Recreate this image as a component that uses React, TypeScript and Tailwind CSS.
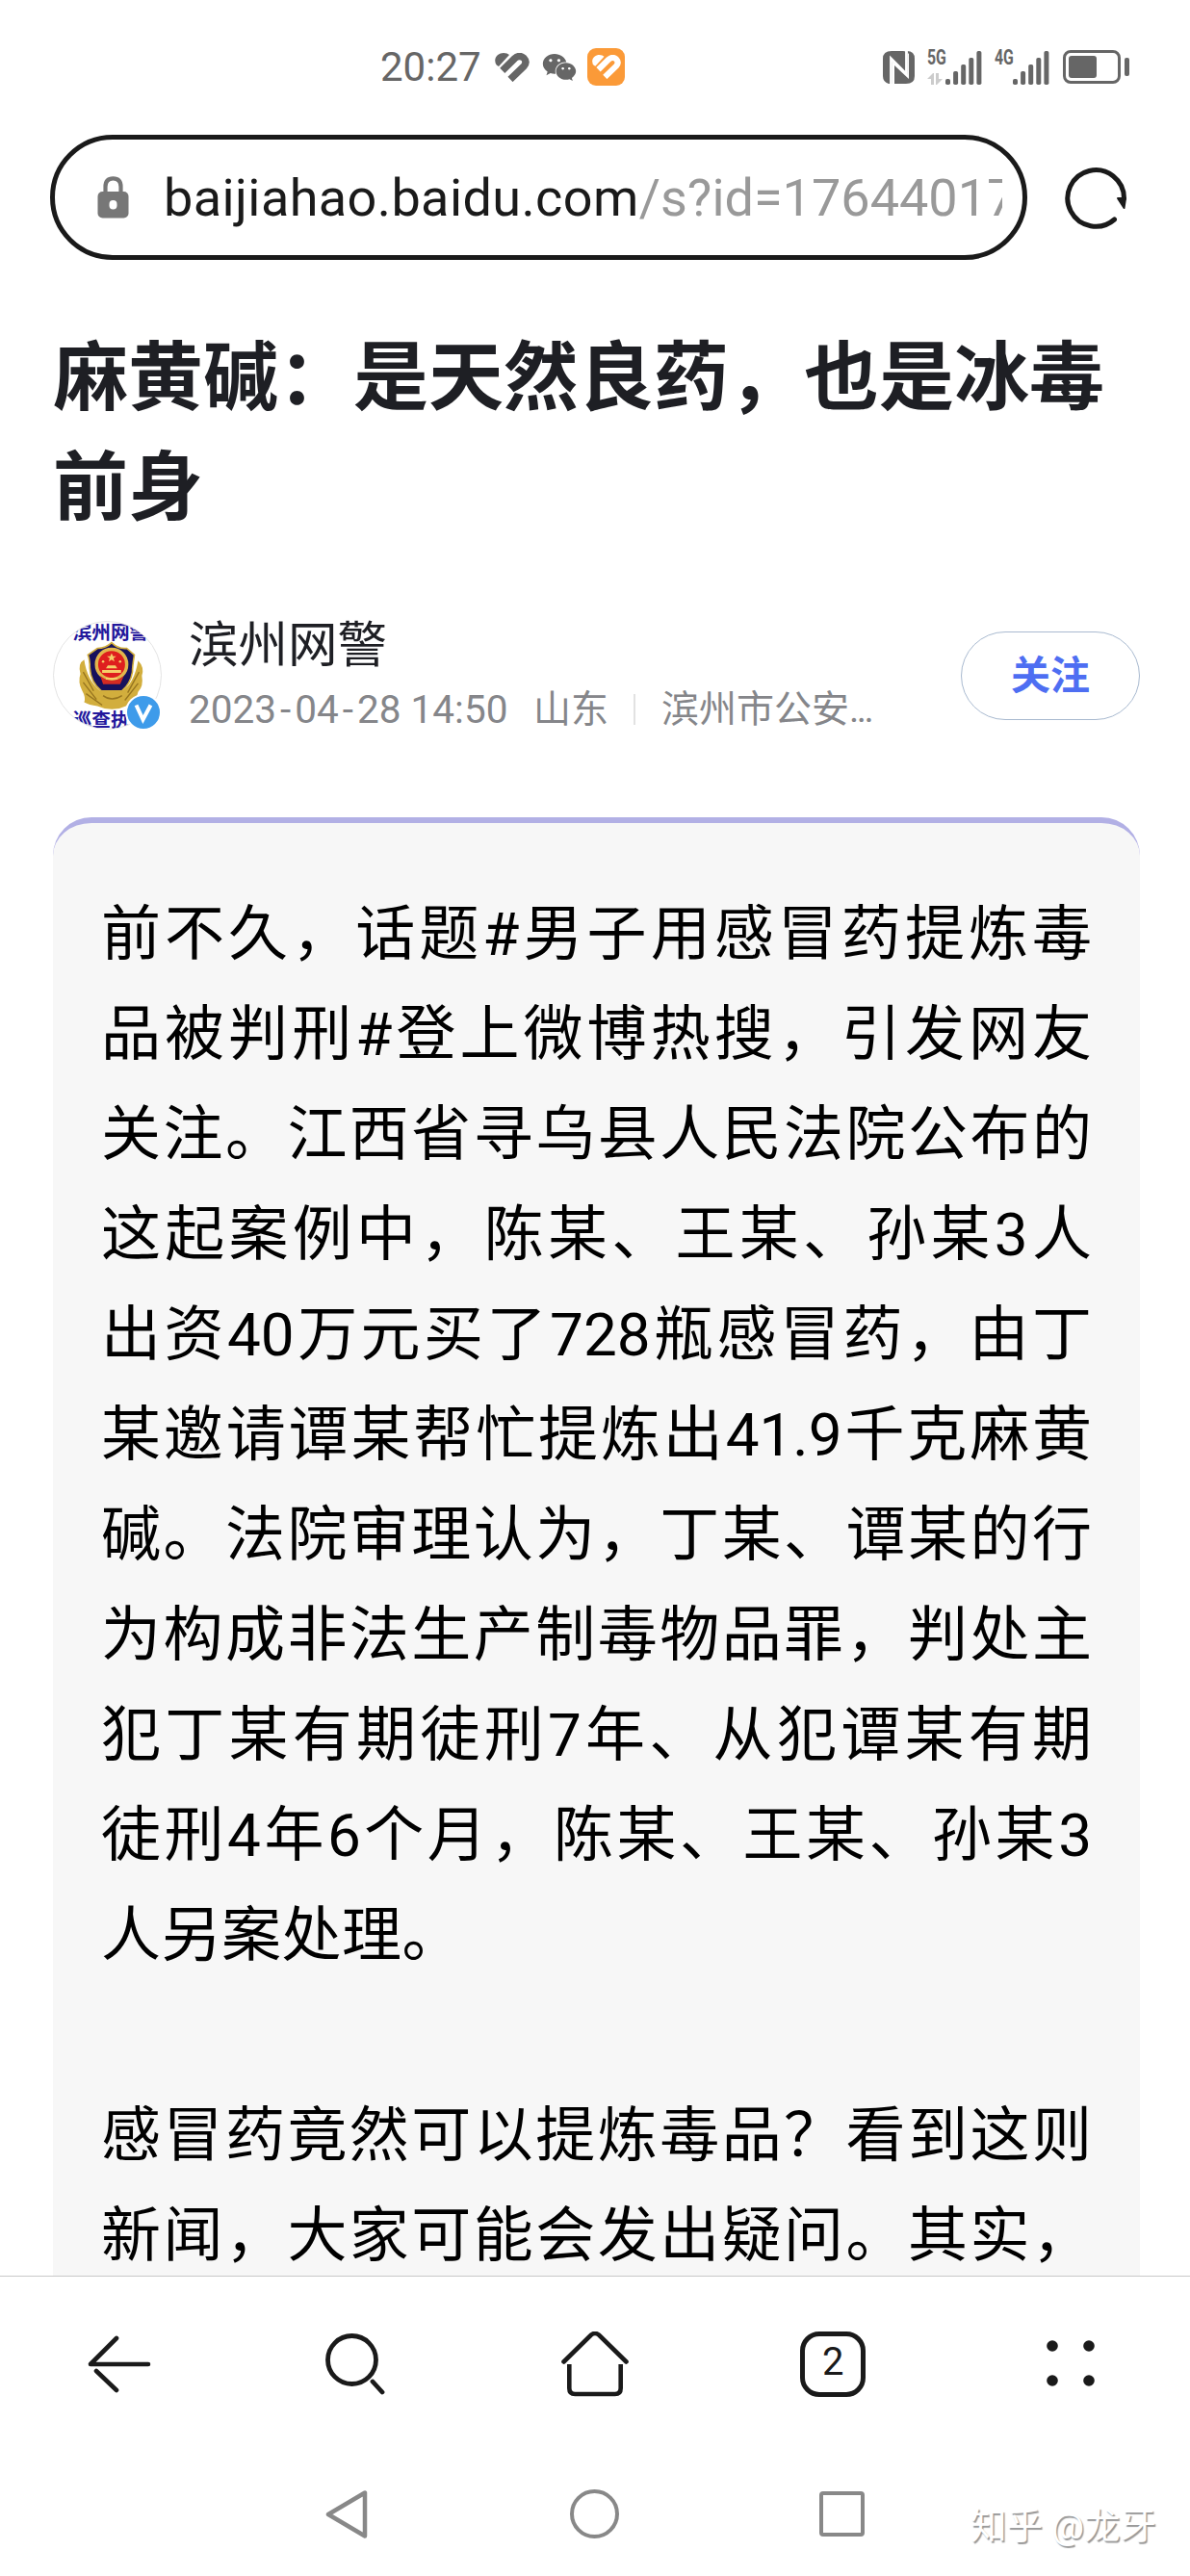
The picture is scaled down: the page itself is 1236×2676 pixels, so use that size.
import type { ReactNode } from 'react';
import { FaWeixin } from 'react-icons/fa';

const firstParagraph = [
  '前不久，话题#男子用感冒药提炼毒',
  '品被判刑#登上微博热搜，引发网友',
  '关注。江西省寻乌县人民法院公布的',
  '这起案例中，陈某、王某、孙某3人',
  '出资40万元买了728瓶感冒药，由丁',
  '某邀请谭某帮忙提炼出41.9千克麻黄',
  '碱。法院审理认为，丁某、谭某的行',
  '为构成非法生产制毒物品罪，判处主',
  '犯丁某有期徒刑7年、从犯谭某有期',
  '徒刑4年6个月，陈某、王某、孙某3',
  '人另案处理。'
];

const secondParagraph = ['感冒药竟然可以提炼毒品？看到这则', '新闻，大家可能会发出疑问。其实，'];

const signalBars = [6, 14, 21, 28, 35];

function Signal() {
  return (
    <svg width="38" height="36" viewBox="0 0 38 36" fill="#666">
      {signalBars.map((height, index) => (
        <rect key={height} x={index * 8.1} y={36 - height} width="5" height={height} rx="1.8" />
      ))}
    </svg>
  );
}

function HeartMark({ className }: { className: string }) {
  return (
    <svg className={className} viewBox="0 0 36 30" fill="currentColor">
      <path d="M0.8 11 C-1.5 4 4 0 9 0 Q13 0 15 2 L4 14 Q1.500 13 0.8 11 Z" />
      <path
        d="M7.800 18.300 L20.500 5.800 Q25.500 1.500 30 5.300 Q34 9.500 30 14 L16 27.500"
        fill="none"
        stroke="currentColor"
        strokeWidth="7.300"
      />
    </svg>
  );
}

function StatusBar() {
  return (
    <header className="flex h-[140px] shrink-0 items-center pb-[1px] pl-[395px] text-[#666]">
      <span className="w-[119px] text-[42px] leading-none">20:27</span>
      <HeartMark className="h-[30px] w-[36px]" />
      <FaWeixin className="ml-[13px] h-[36px] w-[36px]" />
      <span className="ml-[11px] flex h-[39px] w-[39px] items-center justify-center rounded-[9px] bg-[#fb9a38] text-white">
        <HeartMark className="h-[25px] w-[30px]" />
      </span>
      <svg className="ml-[268px]" width="33" height="34" viewBox="0 0 33 34">
        <path d="M9 0 H21 Q24 0 26 2 V25 L10 11 V34 H6 Q0 32 0 26 V8 Q0 0 9 0 Z" fill="#666" />
        <path d="M24 0 H25 Q33 0 33 8 V26 Q33 34 24 34 H12 V15 L27 29 V3 Z" fill="#666" />
        <path d="M8.500 34 V8 L24.500 24 V0" fill="none" stroke="#fff" strokeWidth="2.800" />
      </svg>
      <span className="ml-[13px] flex h-[36px] w-[19px] flex-col">
        <b className="origin-left scale-x-[0.72] text-[22px] leading-[16px]">5G</b>
        <svg className="mt-[8px]" width="17" height="12" viewBox="0 0 17 12" fill="#ccc">
          <path d="M0 6 L6 0 H7 V12 H4 V6 Z M9 0 H12 V6 H16 L10 12 H9 Z" />
        </svg>
      </span>
      <Signal />
      <span className="ml-[13px] flex h-[36px] w-[19px] flex-col">
        <b className="origin-left scale-x-[0.72] text-[22px] leading-[16px]">4G</b>
      </span>
      <Signal />
      <span className="ml-[14px] flex h-[35px] w-[60px] items-center rounded-[8px] border-[3px] border-[#666] pl-[3px]">
        <i className="h-[23px] w-[29px] rounded-[3px] bg-[#666]" />
      </span>
      <i className="ml-[4px] h-[19px] w-[5px] rounded-[2px] bg-[#666]" />
    </header>
  );
}

function AddressBar() {
  return (
    <div className="flex h-[130px] shrink-0 items-center pl-[52px] text-[#1a1a1a]">
      <div className="flex h-[130px] w-[1015px] items-center rounded-full border-[5px] border-[#1a1a1a] pl-[44px]">
        <svg width="33" height="44" viewBox="0 0 33 44">
          <path d="M8.500 18 V11 Q8.500 2.300 16.500 2.300 T24.500 11 V18" fill="none" stroke="#777" strokeWidth="4.200" />
          <rect x="0.500" y="16" width="32" height="27.500" rx="5" fill="#777" />
          <rect x="12.500" y="25" width="8" height="9.500" rx="4" fill="#fff" />
        </svg>
        <div className="mt-[2px] ml-[36px] w-[871px] overflow-hidden text-[54px] leading-[70px] tracking-[0.4px] whitespace-nowrap">
          baijiahao.baidu.com<span className="tracking-normal text-[#999]">/s?id=17644017</span>
        </div>
      </div>
      <svg className="ml-[38px]" width="68" height="68" viewBox="0 0 68 68">
        <path d="M52.500 57 A29.300 29.300 0 1 1 62.500 35" fill="none" stroke="#1a1a1a" strokeWidth="5" strokeLinecap="round" />
        <path d="M56 35 L64 35 L62.500 45 Z" fill="#1a1a1a" stroke="#1a1a1a" strokeWidth="2" strokeLinejoin="round" />
      </svg>
    </div>
  );
}

function Avatar() {
  return (
    <div className="relative h-[113px] w-[113px]">
      <svg className="rounded-full border border-[#e4e4e4] bg-white" width="113" height="113" viewBox="0 0 113 113">
        <g fill="#23189c" fontSize="20" fontWeight="700">
          <text x="20" y="18">滨州网警</text>
          <text x="20" y="111">巡查执法</text>
        </g>
        <path d="M28 55 Q25 44 32 40 Q35 62 49 73 H72 Q85 65 89 41 Q96 48 93 57 Q95 68 89 74 Q87 86 76 89 Q62 96 46 89 Q37 88 32 85 Q34 80 30 73 Q25 64 28 55 Z" fill="#d2ae3d" />
        <path d="M31 53 L42 73 M31 64 L45 82 M34 76 L51 88 M90 53 L78 75 M89 65 L75 83 M52 78 Q61 85 72 78" fill="none" stroke="#97751f" strokeWidth="1.400" />
        <path d="M61 22 Q68 29 77 28 L85 35 Q83 47 83 53 Q81 65 72 73 H50 Q39 64 38 49 Q38 40 36 35 L46 28 Q55 28 61 22 Z" fill="#17115c" stroke="#d2ae3d" strokeWidth="1.600" />
        <circle cx="61" cy="45" r="16" fill="#df1f1e" stroke="#e2b64c" strokeWidth="3.500" />
        <path d="M49 57 L52 66 H70 L74 57 Q61 67 49 57 Z" fill="#d52b22" />
        <path d="M61 33 L62.500 36.500 H66 L63 38.500 L64 42 L61 40 L58 42 L59 38.500 L56 36.500 H59.500 Z M55 49 L57 46 H65 L67 49 Z M51 51 H71 V54 H51 Z M55 59 H67 V61 H55 Z" fill="#f6ce68" />
        <circle cx="52" cy="42" r="1.300" fill="#f6ce68" />
        <circle cx="70" cy="42" r="1.300" fill="#f6ce68" />
      </svg>
      <svg className="absolute top-[76px] left-[75px]" width="38" height="38" viewBox="0 0 38 38">
        <circle cx="19" cy="19" r="18" fill="#3e9bea" stroke="#fff" strokeWidth="2" />
        <path d="M11.500 11.500 L18.500 26.500 L26.500 11.500" fill="none" stroke="#fff" strokeWidth="4" />
      </svg>
    </div>
  );
}

function AuthorRow() {
  return (
    <div className="mt-[80px] flex h-[113px] shrink-0 items-center">
      <Avatar />
      <div className="ml-[28px] flex flex-col">
        <div className="text-[51.500px] leading-[64px] text-[#1e1f24]">滨州网警</div>
        <div className="mt-[6px] flex h-[56px] items-center text-[39px] leading-[56px] text-[#85868a]">
          <span className="w-[358px] text-[40.500px] whitespace-nowrap">
            2023<span className="px-[4px]">-</span>04<span className="px-[4px]">-</span>28 14:50
          </span>
          <span>山东</span>
          <i className="mr-[27px] ml-[26px] h-[32px] w-[2px] bg-[#e2e2e2]" />
          <span>
            滨州市公安<span className="tracking-[-2.500px]">...</span>
          </span>
        </div>
      </div>
      <button className="ml-auto h-[92px] w-[186px] rounded-full border border-[#a9bad0] pt-[2px] text-[41px] font-bold text-[#4e6ef2]">
        关注
      </button>
    </div>
  );
}

function Paragraph({ lines }: { lines: string[] }) {
  return (
    <p className="mb-[104px]">
      {lines.map((line) => (
        <span key={line} className={line.length > 8 ? 'block [text-align-last:justify]' : 'block tracking-[0.5px]'}>
          {line}
        </span>
      ))}
    </p>
  );
}

function NavItem({ children }: { children: ReactNode }) {
  return <div className="flex items-center justify-center">{children}</div>;
}

function BrowserNav() {
  return (
    <nav className="grid h-[184px] shrink-0 grid-cols-5 border-t border-[#c8c8c8] pb-[2px] text-[#1a1a1a]">
      <NavItem>
        <svg width="66" height="60" viewBox="0 0 66 60" fill="none" stroke="currentColor" strokeWidth="4.600" strokeLinecap="round">
          <path d="M63 30 H3 L30 3 M30 57 L9 37" strokeLinejoin="round" />
        </svg>
      </NavItem>
      <NavItem>
        <svg className="mr-[4px]" width="62" height="64" viewBox="0 0 62 64" fill="none" stroke="currentColor" strokeWidth="4.800">
          <circle cx="27.500" cy="27.500" r="25" />
          <path d="M49 50 L59 61" strokeLinecap="round" />
        </svg>
      </NavItem>
      <NavItem>
        <svg width="70" height="68" viewBox="0 0 70 68" fill="none" stroke="currentColor" strokeWidth="4.600" strokeLinecap="round">
          <path d="M2.500 31.500 L31 3.500 Q35 0.500 39 3.500 L67.500 31.500" />
          <path d="M8.300 34 V59 Q8.300 65 14.300 65 H55.700 Q61.700 65 61.700 59 V34" strokeLinecap="butt" />
        </svg>
      </NavItem>
      <NavItem>
        <span className="flex h-[68px] w-[68px] items-center justify-center rounded-[20px] border-[5px] border-current pb-[3px] text-[40px] leading-none">
          2
        </span>
      </NavItem>
      <NavItem>
        <svg width="50" height="50" viewBox="0 0 50 50" fill="currentColor">
          <circle cx="6" cy="6" r="5.800" />
          <circle cx="44" cy="6" r="5.800" />
          <circle cx="6" cy="42" r="5.800" />
          <circle cx="44" cy="42" r="5.800" />
        </svg>
      </NavItem>
    </nav>
  );
}

function SystemNav() {
  return (
    <div className="relative flex h-[128px] shrink-0 justify-center pr-[2px] pb-[1px] text-[#888]">
      <div className="flex w-[257px] items-center justify-center">
        <svg width="44" height="52" viewBox="0 0 44 52" fill="none" stroke="currentColor" strokeWidth="4.500" strokeLinejoin="round">
          <path d="M41 3.500 V48.500 L3 26 Z" />
        </svg>
      </div>
      <div className="flex w-[257px] items-center justify-center">
        <i className="h-[51px] w-[51px] rounded-full border-[4px] border-current" />
      </div>
      <div className="flex w-[257px] items-center justify-center">
        <i className="h-[47px] w-[47px] rounded-[4px] border-[4px] border-current" />
      </div>
      <div className="absolute top-[52px] left-[1008px] text-[37.500px] leading-[48px] whitespace-nowrap text-white [text-shadow:1.500px_1.500px_1px_#999]">
        知乎 @龙牙
      </div>
    </div>
  );
}

export default function App() {
  return (
    <div className="flex h-[2676px] w-[1236px] flex-col overflow-hidden bg-white font-[Roboto,'Noto_Sans_CJK_SC',sans-serif]">
      <StatusBar />
      <AddressBar />
      <main className="flex min-h-0 flex-1 flex-col overflow-hidden pr-[52px] pl-[55px]">
        <h1 className="mt-[67px] shrink-0 text-[78px] leading-[114px] font-bold text-[#1e1f24]">
          麻黄碱：是天然良药，也是冰毒
          <br />
          前身
        </h1>
        <AuthorRow />
        <article className="mt-[91px] min-h-0 flex-1 overflow-hidden rounded-t-[40px] border-t-[6px] border-[#b2b0e5] bg-[#f7f7f7] px-[50px] pt-[64px] text-[62px] leading-[104px] text-black">
          <Paragraph lines={firstParagraph} />
          <Paragraph lines={secondParagraph} />
        </article>
      </main>
      <BrowserNav />
      <SystemNav />
    </div>
  );
}
